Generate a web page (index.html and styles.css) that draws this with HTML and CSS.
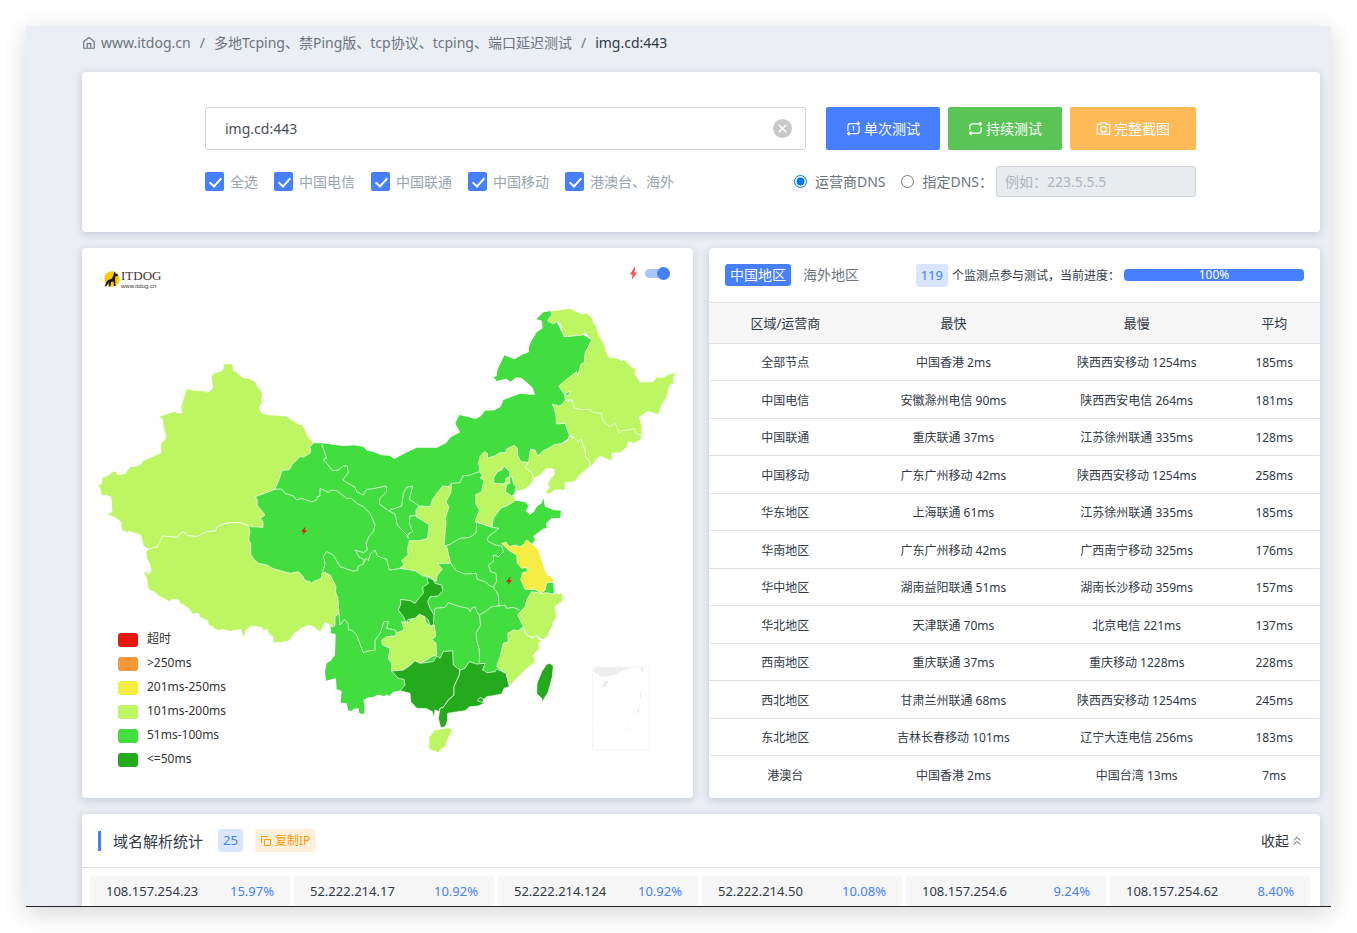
FILE: index.html
```html
<!DOCTYPE html>
<html lang="zh-CN">

<head>
  <meta charset="UTF-8">
  <meta name="viewport" content="width=device-width, initial-scale=1.0">
  <title>img.cd:443</title>
  <link rel="stylesheet" href="styles.css">
</head>

<body>
  <div class="window">
    <nav class="crumb">
      <svg class="icon" viewBox="0 0 24 24"><path d="M3 9.500 12 2.500l9 7V21H3zM9 21v-8h6v8" /></svg>
      <a href="#">www.itdog.cn</a>
      <span class="sep">/</span>
      <a href="#">多地Tcping、禁Ping版、tcp协议、tcping、端口延迟测试</a>
      <span class="sep">/</span>
      <span class="now">img.cd:443</span>
    </nav>

    <section class="card search">
      <form class="form">
        <div class="row">
          <div class="host">
            <input type="text" class="host-input" value="img.cd:443" aria-label="host">
            <button type="button" class="clear" aria-label="clear">
              <svg viewBox="0 0 20 20"><circle cx="10" cy="10" r="10" fill="#c8c8c8" /><path d="M6 6l8 8M14 6l-8 8" stroke="#fff" stroke-width="1.6" /></svg>
            </button>
          </div>
          <div class="btns">
            <button type="button" class="btn blue">
              <svg class="icon" viewBox="0 0 24 24"><path d="M22 4H7a4 4 0 0 0-4 4v8M18.500 1l3 3-3 3M2 20h15a4 4 0 0 0 4-4V8M5.500 17l-3 3 3 3M10.500 10l1.500-1v6.500" /></svg>单次测试</button>
            <button type="button" class="btn green">
              <svg class="icon" viewBox="0 0 24 24"><path d="M22 4.500H7a4 4 0 0 0-4 4V14M18.500 1.500l3 3-3 3M2 19.500h15a4 4 0 0 0 4-4V10M5.500 16.500l-3 3 3 3" /></svg>持续测试</button>
            <button type="button" class="btn orange">
              <svg class="icon" viewBox="0 0 24 24"><path d="M2 5.500h5l2-3h6l2 3h5V21H2z" /><circle cx="12" cy="13" r="4.500" /></svg>完整截图</button>
          </div>
        </div>
        <div class="row options">
          <div class="checks">
            <label><input type="checkbox" checked>全选</label>
            <label><input type="checkbox" checked>中国电信</label>
            <label><input type="checkbox" checked>中国联通</label>
            <label><input type="checkbox" checked>中国移动</label>
            <label><input type="checkbox" checked>港澳台、海外</label>
          </div>
          <div class="dns">
            <label><input type="radio" name="dns" checked>运营商DNS</label>
            <label><input type="radio" name="dns">指定DNS：</label>
            <input type="text" class="dns-input" placeholder="例如：223.5.5.5" aria-label="DNS" disabled>
          </div>
        </div>
      </form>
    </section>

    <div class="columns">
      <section class="card map">
        <div class="logo">
          <svg viewBox="0 0 32 32"><circle cx="16" cy="16" r="15.500" fill="#fccb05" /><path d="M20 4l1-3 2 4 5 2-1 3-4 1-1 6 1 13h-3l-1-9-5 1-1 9h-3l-1-8-4 7-4 1 4-9 3-4 8-3 3-7z" fill="#1c1a17" /></svg>
          <div>
            <div class="logo-name">ITDOG</div>
            <div class="logo-url">www.itdog.cn</div>
          </div>
        </div>
        <label class="toggle">
          <svg viewBox="0 0 10 14"><path d="M6 0 1 8h3L3 14l6-8H6l1-6z" fill="#f5504f" /></svg>
          <input type="checkbox" checked aria-label="闪电">
        </label>

        <svg class="china" viewBox="6 -6 1833 1650">
          <!-- green land, the other colours are drawn over it -->
          <path class="g" d="M699 580 725 580 760 584 790 588 825 586 850 591 860 601 880 606 905 616 928 617 943 627 975 610 1010 593 1070 593 1098 580 1112 562 1140 547 1126 520 1138 495 1188 507 1203 498 1214 482 1244 481 1262 470 1270 450 1292 442 1320 431 1365 435 1358 413 1340 397 1325 384 1308 382 1292 395 1278 386 1250 393 1241 382 1250 378 1252 360 1273 316 1304 328 1325 315 1347 306 1347 290 1356 270 1370 247 1388 235 1386 212 1369 208 1390 187 1413 183 1450 255 1510 255 1535 270 1515 310 1513 338 1493 375 1475 450 1470 560 1370 640 1340 640 1310 720 1305 725 1300 745 1308 752 1337 757 1345 770 1337 782 1350 794 1362 785 1370 770 1385 760 1390 745 1395 770 1420 780 1443 782 1440 804 1415 804 1398 820 1400 834 1388 837 1360 858 1365 870 1345 895 1400 980 1420 1000 1422 1030 1405 1035 1350 1080 1340 1150 1290 1200 1270 1275 1200 1300 1020 1300 960 1322 940 1325 928 1338 920 1333 912 1339 900 1334 890 1335 882 1340 866 1342 850 1350 854 1370 851 1393 838 1390 836 1375 822 1376 815 1382 805 1382 800 1360 782 1358 785 1322 770 1318 768 1285 738 1292 735 1265 740 1240 752 1232 765 1215 767 1152 753 1150 752 1130 700 1050 500 960 480 820 520 740 580 700 600 640 680 600z" />
          <g class="l">
            <!-- 新疆 -->
            <path d="M430 342 456 341 456 347 461 352 459 361 470 367 484 380 494 385 508 384 512 390 526 394 533 412 545 424 548 436 544 444 548 458 541 464 538 476 545 489 562 494 618 498 655 522 668 525 678 545 685 562 699 578 698 583 688 590 692 600 690 610 668 622 661 619 635 645 628 659 606 661 598 686 585 718 526 740 532 750 531 765 543 780 555 795 540 805 549 815 549 832 515 830 505 827 480 818 452 818 430 822 412 830 408 842 378 846 352 860 325 857 310 846 303 848 292 862 248 858 232 890 205 898 190 887 182 855 158 848 146 843 142 848 125 840 122 815 100 800 82 794 96 785 93 742 80 735 65 738 60 715 53 709 66 700 65 685 92 672 94 666 108 663 113 674 135 671 150 650 172 648 185 640 187 633 243 608 242 580 256 568 258 560 250 530 248 508 236 500 285 484 292 489 307 488 302 473 320 415 345 422 372 422 378 427 390 423 398 412 394 380 400 370 424 363 430 355z" />
            <!-- 西藏 -->
            <path d="M205 898 232 890 248 858 292 862 303 848 310 846 325 857 352 860 378 846 408 842 412 830 430 822 452 818 480 818 505 827 510 842 506 870 512 880 512 912 522 928 535 940 560 945 580 956 612 965 632 970 655 965 668 978 675 992 690 995 695 1000 700 995 712 990 725 985 725 970 735 967 750 975 760 993 768 1010 766 1025 773 1040 777 1090 765 1100 765 1127 755 1130 748 1122 735 1118 722 1145 710 1140 705 1132 685 1126 665 1135 640 1153 628 1172 605 1177 580 1179 578 1158 565 1152 563 1138 550 1142 545 1132 512 1128 497 1142 493 1164 486 1152 484 1138 450 1144 425 1138 420 1142 405 1138 398 1130 385 1125 383 1112 360 1102 355 1090 338 1092 325 1074 298 1058 295 1048 275 1048 270 1055 240 1040 225 1028 205 1017 200 985 192 970 200 962 205 972 213 965 210 945 200 925 198 905z" />
            <!-- 辽宁 -->
            <path d="M1467 557 1465 570 1452 578 1440 582 1425 583 1405 595 1390 602 1373 618 1365 600 1352 597 1348 615 1347 632 1336 653 1355 668 1360 687 1380 675 1400 655 1422 658 1423 672 1403 698 1408 713 1395 728 1408 732 1425 720 1455 720 1456 697 1485 695 1497 677 1529 650 1529 635 1517 620 1515 600 1503 568 1490 568z" />
            <!-- 吉林 -->
            <path d="M1456 450 1445 465 1435 468 1417 462 1427 490 1430 522 1455 520 1467 552 1480 562 1494 575 1503 568 1515 600 1517 620 1529 635 1530 649 1538 645 1547 630 1560 618 1580 628 1597 632 1595 610 1620 608 1642 590 1645 575 1657 578 1665 590 1662 580 1682 570 1685 557 1650 520 1560 470z" />
            <!-- 黑龙江 -->
            <path d="M1413 183 1470 175 1505 192 1520 190 1538 205 1540 218 1550 230 1552 245 1562 265 1573 285 1580 310 1587 322 1615 325 1622 332 1635 330 1657 354 1668 354 1665 370 1679 396 1720 395 1728 382 1750 382 1765 373 1790 368 1780 382 1782 400 1770 405 1765 420 1760 442 1745 465 1735 494 1703 484 1678 502 1686 530 1685 557 1668 550 1662 535 1645 540 1625 542 1618 550 1605 518 1592 530 1580 523 1568 510 1565 490 1540 488 1528 478 1500 478 1483 475 1476 450 1456 450 1454 435 1436 408 1460 388 1490 365 1493 378 1503 342 1513 338 1515 310 1535 270 1515 248 1507 255 1480 258 1452 260 1440 220 1430 215 1420 222 1402 212 1415 195z" />
            <!-- 河北 -->
            <path d="M1213 605 1222 610 1223 625 1245 617 1260 608 1278 608 1280 597 1303 586 1312 595 1313 615 1322 635 1345 637 1336 653 1355 668 1362 690 1345 710 1330 720 1314 724 1306 712 1300 735 1308 750 1285 765 1262 775 1240 805 1236 832 1185 815 1198 780 1187 760 1187 735 1205 725 1212 690 1200 684 1207 675 1200 668 1196 640 1200 618z" />
            <!-- 陕西 -->
            <path d="M1115 700 1105 710 1088 708 1078 720 1058 748 1050 770 1018 768 1008 780 1008 800 1028 812 1047 823 1043 865 1020 872 988 872 982 900 985 915 965 932 972 945 958 955 1005 962 1030 978 1050 980 1068 995 1072 975 1087 958 1072 940 1112 940 1100 890 1092 885 1098 820 1097 800 1107 772 1098 755 1112 730z" />
            <!-- 浙江 -->
            <path d="M1355 1025 1383 1030 1400 1028 1420 1033 1430 1030 1447 1030 1449 1052 1425 1070 1430 1100 1420 1115 1418 1128 1410 1140 1405 1155 1390 1170 1375 1160 1360 1162 1340 1155 1330 1130 1318 1105 1313 1095 1335 1070 1340 1050z" />
            <!-- 福建 -->
            <path d="M1330 1130 1335 1150 1345 1158 1360 1164 1367 1154 1375 1167 1388 1172 1375 1180 1379 1195 1360 1215 1365 1237 1345 1252 1330 1265 1310 1285 1295 1302 1288 1302 1278 1270 1250 1250 1260 1220 1270 1180 1285 1175 1283 1150 1300 1140 1315 1142z" />
            <!-- 贵州 -->
            <path d="M965 1115 985 1118 1000 1102 1018 1093 1030 1097 1040 1120 1050 1128 1063 1125 1067 1160 1055 1168 1068 1180 1070 1215 1055 1220 1040 1230 1020 1240 1005 1232 992 1245 970 1260 935 1263 935 1240 925 1225 930 1195 908 1185 905 1170 920 1160 945 1158 950 1148 972 1140z" />
            <!-- 海南 -->
            <path d="M1065 1440 1105 1433 1117 1440 1100 1475 1097 1488 1080 1500 1075 1508 1047 1498 1047 1462z" />
          </g>
          <!-- 江苏 -->
          <path class="y" d="M1265 880 1278 877 1288 890 1305 885 1320 890 1330 885 1340 870 1375 898 1385 930 1395 960 1402 975 1420 985 1422 997 1400 998 1395 1020 1383 1030 1365 1018 1335 1018 1322 988 1328 968 1342 965 1340 952 1325 955 1312 940 1310 915 1285 900z" />
          <g class="d">
            <!-- 重庆 -->
            <path d="M1040 980 1060 990 1065 1000 1085 1005 1088 1022 1075 1038 1050 1040 1043 1055 1050 1075 1062 1095 1060 1125 1050 1128 1045 1110 1035 1100 1018 1093 1005 1105 985 1108 978 1118 970 1100 955 1080 962 1062 962 1048 990 1052 1005 1060 1020 1040 1030 1030 1028 1012 1045 1000z" />
            <!-- 广西 -->
            <path d="M935 1263 970 1260 992 1245 1005 1232 1020 1240 1060 1235 1070 1218 1080 1225 1090 1205 1118 1202 1120 1245 1140 1260 1138 1275 1122 1310 1122 1335 1105 1350 1090 1372 1080 1375 1078 1385 1065 1380 1062 1405 1057 1385 1040 1376 1010 1375 992 1355 990 1330 960 1322 975 1305 972 1288 955 1285z" />
            <!-- 广东 -->
            <path d="M1250 1257 1278 1270 1288 1310 1272 1315 1265 1332 1240 1337 1220 1340 1210 1350 1212 1360 1195 1368 1170 1370 1155 1382 1103 1390 1103 1410 1096 1430 1082 1433 1075 1405 1080 1375 1090 1372 1105 1350 1122 1335 1122 1310 1138 1275 1140 1260 1155 1255 1168 1235 1190 1242 1215 1240 1208 1260 1222 1268 1245 1265z" />
            <!-- 台湾 -->
            <path d="M1410 1240 1420 1248 1417 1280 1405 1325 1390 1350 1388 1362 1385 1345 1370 1330 1371 1300 1385 1265 1400 1243z" />
          </g>
          <g class="g edge">
            <path d="M1272 648 1290 665 1288 680 1278 685 1274 702 1242 700 1240 685 1252 665 1265 660z" />
            <path d="M1288 683 1297 680 1300 700 1308 710 1304 732 1295 738 1276 725 1280 702 1290 700z" />
            <path d="M1455 432 1469 424 1469 433 1458 437z" />
          </g>
          <!-- province borders inside the green area -->
          <g class="line">
            <path d="M585 718 605 717 615 730 640 738 650 750 665 745 695 756 710 750 712 740 720 738 720 715 745 727 755 720 770 722 800 745 815 745 830 760 850 770 870 790 885 825 880 845 868 858 858 880 862 900 850 908 825 900 838 922 852 928 850 942 835 948 833 960 822 964 795 955 780 950 760 915 740 905 730 918 735 940 728 967" />
            <path d="M725 582 740 625 730 628 758 662 775 660 790 648 802 648 805 668 788 690 825 712 830 725 850 735 860 718 880 716 918 708 920 725 900 745 898 762 925 782 965 768 970 730 980 712 998 708 988 748 1018 768" />
            <path d="M925 782 945 792 952 825 980 855 984 865 984 852 998 845 988 820 990 798 1008 797" />
            <path d="M850 942 858 925 865 932 872 910 885 900 892 918 920 928 928 960 958 956" />
            <path d="M1115 700 1140 698 1148 678 1170 675 1198 665M1092 888 1110 883 1140 865 1170 862 1188 848 1190 820" />
            <path d="M1236 832 1257 835 1225 860 1222 872 1245 885 1265 888 1270 905 1255 920 1240 915 1240 935 1225 945 1232 965 1248 970 1250 995 1240 1010 1255 1035 1257 1068" />
            <path d="M1112 940 1128 962 1155 972 1188 970 1192 988 1215 995 1230 1008 1240 1010" />
            <path d="M1063 1095 1065 1075 1095 1072 1105 1058 1140 1070 1165 1075 1170 1085 1175 1075 1185 1070 1190 1085 1198 1095 1220 1082 1235 1070 1257 1068 1275 1065 1280 1075 1300 1072 1318 1080" />
            <path d="M1198 1095 1202 1125 1188 1150 1190 1170 1198 1200 1198 1238" />
            <path d="M777 1090 780 1125 793 1108 805 1122 805 1140 815 1140 830 1155 850 1208 865 1203 885 1200 885 1170 900 1150 912 1115 925 1115 920 1135 945 1140 950 1150" />
            <path d="M1192 1352 1200 1342 1212 1348 1208 1358z" />
          </g>
          <!-- 南海诸岛 -->
          <g fill="#ededed">
            <path d="M1538 1262 1550 1251 1655 1251 1600 1276 1565 1281zM1680 1251h12l-4 18zM1572 1293l14-1-8 18-11 2zM1672 1380l6-8v14l-8 4zM1680 1325h3v20h-3z" />
            <path d="M1570 1393l12-14-10 14zM1638 1438l10-14-8 16zM1554 1423l3 12-2 2zM1697 1280l5-10-4 12zM1600 1472l8-4-5 5z" />
          </g>
          <rect x="1538" y="1251" width="170" height="248" fill="none" stroke="#f5f5f5" stroke-width="3" />
          <g fill="#e61610">
            <path d="M675 832 663 845h8l-3 10 13-14h-8l4-9z" />
            <path d="M1290 982 1278 995h8l-3 10 13-14h-8l4-9z" />
          </g>
        </svg>

        <ul class="legend">
          <li><i class="c1"></i>超时</li>
          <li><i class="c2"></i>&gt;250ms</li>
          <li><i class="c3"></i>201ms-250ms</li>
          <li><i class="c4"></i>101ms-200ms</li>
          <li><i class="c5"></i>51ms-100ms</li>
          <li><i class="c6"></i>&lt;=50ms</li>
        </ul>
      </section>

      <section class="card result">
        <div class="result-head">
          <button type="button" class="tab active">中国地区</button>
          <button type="button" class="tab">海外地区</button>
          <div class="status">
            <span class="badge">119</span>
            <span class="status-text">个监测点参与测试，当前进度：</span>
            <div class="progress"><div class="bar" style="width: 100%">100%</div></div>
          </div>
        </div>
        <table>
          <thead>
            <tr><th>区域/运营商</th><th>最快</th><th>最慢</th><th>平均</th></tr>
          </thead>
          <tbody>
            <tr><td>全部节点</td><td>中国香港 2ms</td><td>陕西西安移动 1254ms</td><td>185ms</td></tr>
            <tr><td>中国电信</td><td>安徽滁州电信 90ms</td><td>陕西西安电信 264ms</td><td>181ms</td></tr>
            <tr><td>中国联通</td><td>重庆联通 37ms</td><td>江苏徐州联通 335ms</td><td>128ms</td></tr>
            <tr><td>中国移动</td><td>广东广州移动 42ms</td><td>陕西西安移动 1254ms</td><td>258ms</td></tr>
            <tr><td>华东地区</td><td>上海联通 61ms</td><td>江苏徐州联通 335ms</td><td>185ms</td></tr>
            <tr><td>华南地区</td><td>广东广州移动 42ms</td><td>广西南宁移动 325ms</td><td>176ms</td></tr>
            <tr><td>华中地区</td><td>湖南益阳联通 51ms</td><td>湖南长沙移动 359ms</td><td>157ms</td></tr>
            <tr><td>华北地区</td><td>天津联通 70ms</td><td>北京电信 221ms</td><td>137ms</td></tr>
            <tr><td>西南地区</td><td>重庆联通 37ms</td><td>重庆移动 1228ms</td><td>228ms</td></tr>
            <tr><td>西北地区</td><td>甘肃兰州联通 68ms</td><td>陕西西安移动 1254ms</td><td>245ms</td></tr>
            <tr><td>东北地区</td><td>吉林长春移动 101ms</td><td>辽宁大连电信 256ms</td><td>183ms</td></tr>
            <tr><td>港澳台</td><td>中国香港 2ms</td><td>中国台湾 13ms</td><td>7ms</td></tr>
          </tbody>
        </table>
      </section>
    </div>

    <section class="card resolve">
      <div class="resolve-head">
        <h2>域名解析统计</h2>
        <span class="badge">25</span>
        <button type="button" class="copy">
          <svg class="icon" viewBox="0 0 24 24"><path d="M9 9h12v12H9zM5 15H3V3h12v2" /></svg>复制IP</button>
        <button type="button" class="fold">收起
          <svg class="icon" viewBox="0 0 24 24"><path d="M4 11l8-8 8 8M4 21l8-8 8 8" /></svg></button>
      </div>
      <ul class="ips">
        <li>108.157.254.23<span>15.97%</span></li>
        <li>52.222.214.17<span>10.92%</span></li>
        <li>52.222.214.124<span>10.92%</span></li>
        <li>52.222.214.50<span>10.08%</span></li>
        <li>108.157.254.6<span>9.24%</span></li>
        <li>108.157.254.62<span>8.40%</span></li>
      </ul>
    </section>
  </div>
</body>

</html>
```
FILE: styles.css
```css
* {
  box-sizing: border-box;
}

body {
  margin: 0;
  background: #fff;
  color: #313a46;
  font-family: "Noto Sans", "Noto Sans CJK SC", sans-serif;
  font-size: 14px;
  line-height: 20px;
}

button,
input {
  margin: 0;
  font-family: inherit;
  font-size: 14px;
  color: inherit;
}

button {
  padding: 0;
  border: 0;
  background: none;
  line-height: 20px;
  cursor: pointer;
}

ul,
h2 {
  margin: 0;
  padding: 0;
  list-style: none;
}

.icon {
  flex: none;
  width: 14px;
  height: 14px;
  fill: none;
  stroke: currentColor;
  stroke-width: 2;
}

.window {
  height: calc(100vh - 52px);
  margin: 26px;
  padding: 5px 11px 0 56px;
  overflow: hidden;
  background: #ebeef3;
  border-bottom: 1px solid #222;
  box-shadow: 0 6px 24px rgba(0, 0, 0, 0.16);
}

.card {
  margin-bottom: 16px;
  background: #fff;
  border-radius: 4px;
  box-shadow: 0 2px 8px rgba(80, 100, 140, 0.28);
}

/* breadcrumb */
.crumb {
  display: flex;
  align-items: center;
  height: 24px;
  margin-bottom: 17px;
  color: #6c757d;
}

.crumb .icon {
  margin-right: 5px;
}

.crumb a {
  color: #6c757d;
  text-decoration: none;
}

.sep {
  margin: 0 9px;
}

.now {
  color: #313a46;
}

/* search */
.search {
  padding: 35px 124px 35px 123px;
}

.row {
  display: flex;
  align-items: center;
  gap: 20px;
}

.host {
  position: relative;
  flex: 1;
}

.host-input {
  display: block;
  width: 100%;
  height: 43px;
  padding: 0 50px 0 19px;
  border: 1px solid #ced4da;
  border-radius: 3px;
  color: #495057;
}

.clear {
  position: absolute;
  top: 12px;
  right: 14px;
  width: 19px;
  height: 19px;
}

.clear svg {
  display: block;
}

.btns {
  display: flex;
  gap: 8px;
}

.btn {
  display: flex;
  align-items: center;
  gap: 3px;
  height: 43px;
  padding: 0 20px;
  border-radius: 2px;
  color: #fff;
}

.btn .icon {
  width: 15px;
  height: 15px;
}

.blue {
  background: #467fff;
}

.green {
  background: #5ac456;
}

.orange {
  padding: 0 26px;
  background: #ffb957;
}

.options {
  justify-content: space-between;
  margin-top: 16px;
}

.checks,
.dns {
  display: flex;
  align-items: center;
  gap: 16px;
}

.checks label {
  display: flex;
  align-items: center;
  gap: 6px;
  color: #98a6ad;
}

.checks input {
  position: relative;
  width: 19px;
  height: 19px;
  appearance: none;
  background: #467fff;
  border-radius: 2px;
}

.checks input::after {
  content: '';
  position: absolute;
  top: 3px;
  left: 7px;
  width: 5px;
  height: 10px;
  border: solid #fff;
  border-width: 0 2px 2px 0;
  transform: rotate(42deg);
}

.dns label {
  display: flex;
  align-items: center;
  gap: 8px;
  color: #6c757d;
}

.dns label + input {
  margin-left: -13px;
}

.dns input[type="radio"] {
  width: 13px;
  height: 13px;
}

.dns-input {
  width: 200px;
  height: 31px;
  padding: 0 8px;
  border: 1px solid #ced4da;
  border-radius: 3px;
  background: #e9ecef;
}

.dns-input::placeholder {
  color: #adb5bd;
}

/* map and table */
.columns {
  display: grid;
  grid-template-columns: 1fr 1fr;
  gap: 16px;
}

.map {
  position: relative;
}

.logo {
  position: absolute;
  top: 20px;
  left: 22px;
  display: flex;
  align-items: center;
  gap: 1px;
  color: #3b3330;
}

.logo svg {
  width: 16px;
  height: 16px;
}

.logo-name {
  font: 13px/15px "Liberation Serif", serif;
}

.logo-url {
  font: 6px/7px "Liberation Sans", sans-serif;
}

.toggle {
  position: absolute;
  top: 19px;
  right: 23px;
  display: flex;
  align-items: center;
  gap: 7px;
}

.toggle svg {
  width: 9px;
  height: 13px;
}

.toggle input {
  position: relative;
  width: 25px;
  height: 9px;
  appearance: none;
  background: #a9c4ff;
  border-radius: 5px;
}

.toggle input::after {
  content: '';
  position: absolute;
  top: -2px;
  right: 0;
  width: 13px;
  height: 13px;
  background: #467fff;
  border-radius: 50%;
}

.china {
  display: block;
  width: 100%;
}

.china path {
  stroke-linejoin: round;
}

.g {
  fill: #42dd3f;
}

.l {
  fill: #bef663;
}

.y {
  fill: #f6ed44;
}

.d {
  fill: #24aa1d;
}

.l,
.y,
.d,
.edge,
.line {
  stroke: rgba(255, 255, 255, 0.7);
  stroke-width: 3;
}

.line {
  fill: none;
}

.legend {
  position: absolute;
  bottom: 27px;
  left: 36px;
  color: #333;
  font-size: 12px;
  line-height: 24px;
}

.legend li {
  display: flex;
  align-items: center;
  gap: 9px;
}

.legend i {
  width: 20px;
  height: 14px;
  margin-top: 2px;
  border-radius: 3px;
}

.c1 {
  background: #e61610;
}

.c2 {
  background: #f69833;
}

.c3 {
  background: #f6ed44;
}

.c4 {
  background: #bef663;
}

.c5 {
  background: #42dd3f;
}

.c6 {
  background: #24aa1d;
}

.result-head {
  display: flex;
  align-items: center;
  gap: 8px;
  height: 55px;
  padding: 0 16px;
  border-bottom: 1px solid #dee2e6;
}

.tab {
  height: 22px;
  padding: 0 4px;
  border-radius: 3px;
  color: #6c757d;
}

.tab.active {
  width: 66px;
  background: #467fff;
  color: #fff;
}

.status {
  display: flex;
  align-items: center;
  gap: 4px;
  margin-left: auto;
  font-size: 12px;
}

.status-text {
  padding-top: 2px;
}

.badge {
  padding: 0 5px;
  border-radius: 3px;
  background: #dae5ff;
  color: #467fff;
  font-size: 13px;
  line-height: 23px;
}

.progress {
  width: 180px;
  border-radius: 4px;
  background: #e9ecef;
}

.bar {
  height: 12px;
  border-radius: 4px;
  background: #467fff;
  color: #fff;
  text-align: center;
  line-height: 12px;
}

table {
  width: 100%;
  table-layout: fixed;
  border-collapse: separate;
  border-spacing: 0;
  text-align: center;
  font-size: 12px;
}

th,
td {
  height: 37px;
  padding: 0;
  border-bottom: 1px solid #dee2e6;
}

td {
  padding-top: 2px;
}

tr:nth-child(even) td {
  height: 38px;
}

tr:last-child td {
  border-bottom: 0;
}

th {
  width: 25%;
  height: 41px;
  background: #f6f6f6;
  font-size: 13px;
  font-weight: normal;
}

th:nth-child(2),
th:nth-child(3) {
  width: 30%;
}

th:last-child {
  width: 15%;
}

/* resolve */
.resolve-head {
  display: flex;
  align-items: center;
  gap: 12px;
  height: 54px;
  padding: 0 18px 0 16px;
  border-bottom: 1px solid #dee2e6;
}

.resolve h2 {
  margin-right: 3px;
  padding-left: 12px;
  border-left: 3px solid #467fff;
  font-size: 15px;
  font-weight: normal;
  line-height: 20px;
}

.copy {
  display: flex;
  align-items: center;
  gap: 3px;
  height: 23px;
  padding: 0 5px;
  border-radius: 3px;
  background: #fff0dc;
  color: #ff9900;
  font-size: 12px;
}

.copy .icon {
  width: 12px;
  height: 12px;
}

.fold {
  display: flex;
  align-items: center;
  gap: 3px;
  margin-left: auto;
}

.fold .icon {
  width: 10px;
  height: 10px;
}

.ips {
  display: grid;
  grid-template-columns: repeat(6, 1fr);
  gap: 4px;
  padding: 8px 10px 8px 8px;
}

.ips li {
  display: flex;
  justify-content: space-between;
  padding: 5px 16px;
  border-radius: 3px;
  background: #f6f6f6;
  font-size: 13px;
}

.ips span {
  color: #467fff;
}
```
